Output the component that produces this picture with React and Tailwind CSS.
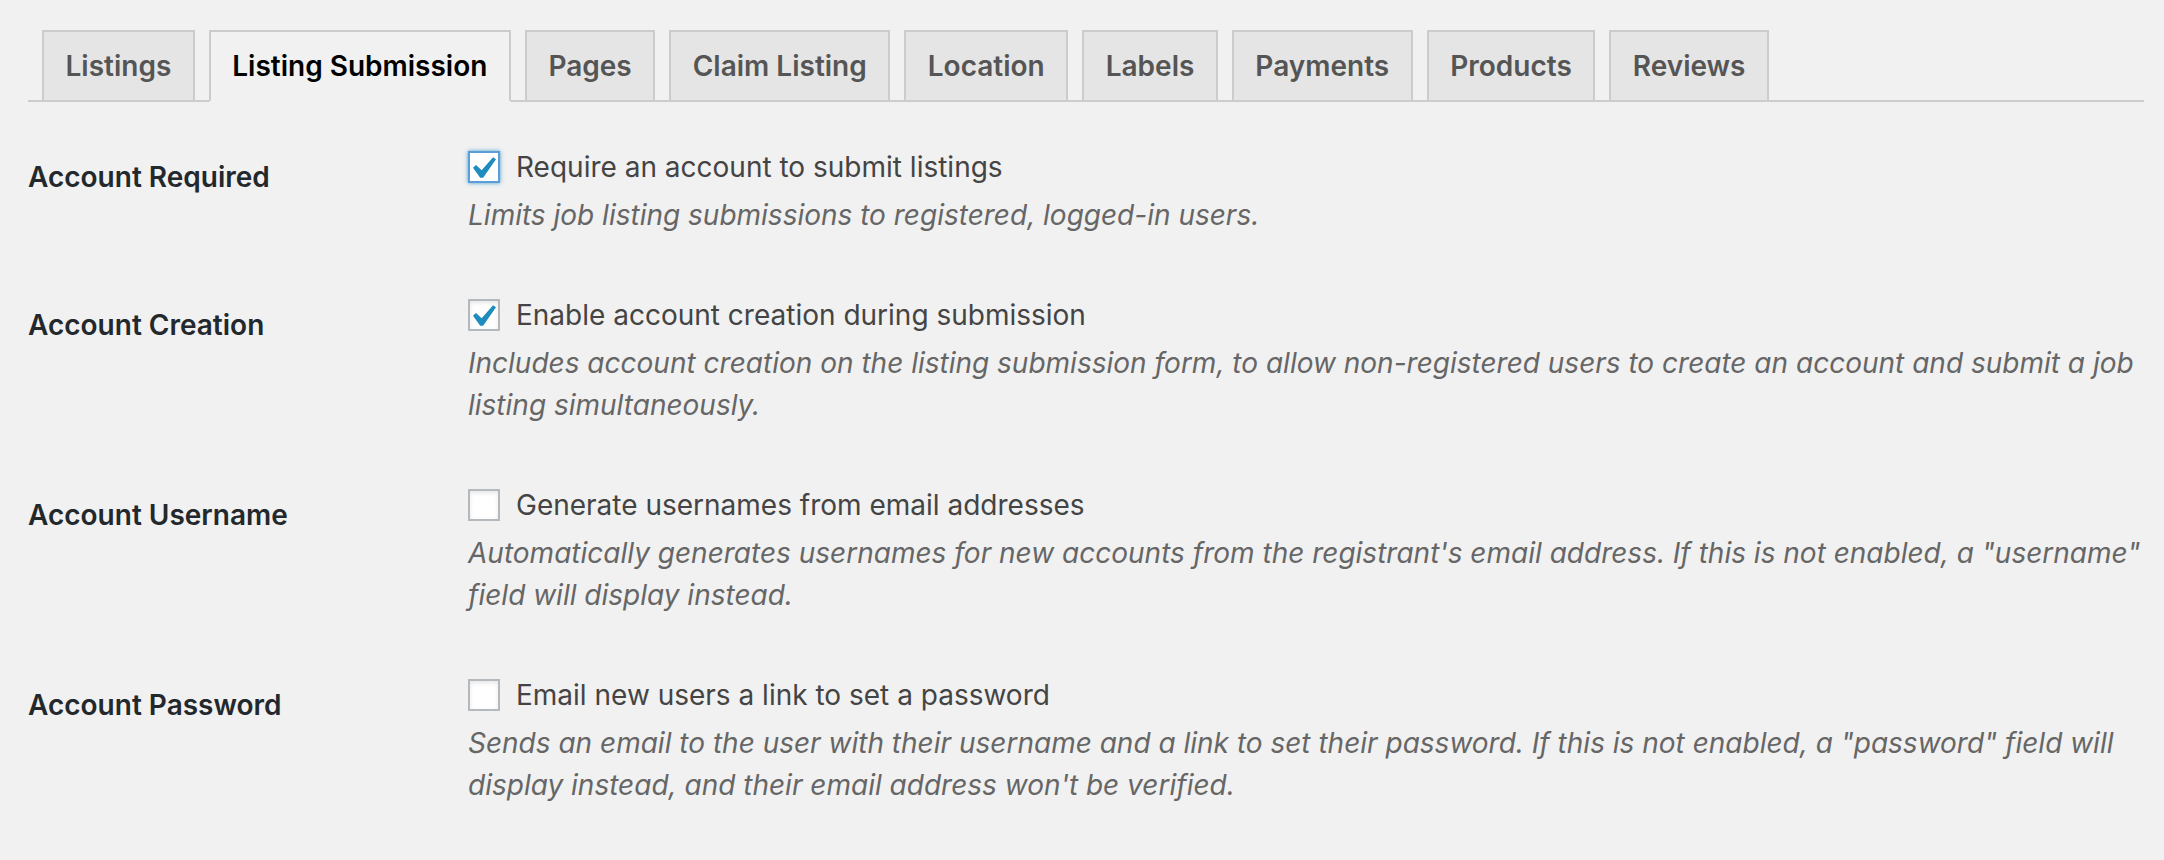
import React from "react";

const TABS = [
  "Listings",
  "Listing Submission",
  "Pages",
  "Claim Listing",
  "Location",
  "Labels",
  "Payments",
  "Products",
  "Reviews",
];

const ROWS = [
  {
    label: "Account Required",
    option: "Require an account to submit listings",
    checked: true,
    focused: true,
    help: "Limits job listing submissions to registered, logged-in users.",
  },
  {
    label: "Account Creation",
    option: "Enable account creation during submission",
    checked: true,
    help: "Includes account creation on the listing submission form, to allow non-registered users to create an account and submit a job listing simultaneously.",
  },
  {
    label: "Account Username",
    option: "Generate usernames from email addresses",
    checked: false,
    help: 'Automatically generates usernames for new accounts from the registrant\'s email address. If this is not enabled, a "username" field will display instead.',
  },
  {
    label: "Account Password",
    option: "Email new users a link to set a password",
    checked: false,
    help: 'Sends an email to the user with their username and a link to set their password. If this is not enabled, a "password" field will display instead, and their email address won\'t be verified.',
  },
];

const Checkbox = ({ checked, focused }) => (
  <span
    className={
      focused
        ? "relative block w-[32px] h-[32px] shrink-0 bg-white border-2 border-[#5b9dd9] shadow-[0_0_4px_rgba(30,140,190,0.8)]"
        : "relative block w-[32px] h-[32px] shrink-0 bg-white border-2 border-[#b4b9be] shadow-[inset_0_2px_4px_rgba(0,0,0,0.1)]"
    }
  >
    {checked && (
      <svg
        className="absolute left-[3px] top-[4px]"
        width="23"
        height="21"
        viewBox="5.78 4.89 10.39 9.32"
      >
        <path
          d="M14.83 4.89l1.34.94-5.81 8.38H9.02L5.78 9.67l1.34-1.25 2.57 2.4z"
          fill="#1e8cbe"
        />
      </svg>
    )}
  </span>
);

const SettingRow = ({ row }) => (
  <div className="flex">
    <div className="w-[420px] shrink-0 pr-[20px] pt-[41px] pb-[40px] text-[28px] leading-[36.4px] font-semibold text-[#23282d]">
      {row.label}
    </div>
    <div className="flex-1 pl-[20px] py-[30px]">
      <label className="flex items-center gap-[16px] text-[28px] leading-[38px] text-[#444]">
        <Checkbox checked={row.checked} focused={row.focused} />
        <span>{row.option}</span>
      </label>
      <p className="mt-[8px] text-[28px] leading-[42px] italic text-[#666]">
        {row.help}
      </p>
    </div>
  </div>
);

export default function App() {
  return (
    <div
      className="min-h-screen bg-[#f1f1f1] pl-[28px] pr-[20px] pt-[30px]"
      style={{ fontFamily: "Inter, 'Liberation Sans', sans-serif" }}
    >
      <nav className="flex items-end border-b-2 border-[#cccccc]">
        {TABS.map((tab) => {
          const active = tab === "Listing Submission";
          return (
            <a
              key={tab}
              className={
                active
                  ? "ml-[14px] -mb-[2px] border-2 border-[#cccccc] border-b-[#f1f1f1] bg-[#f1f1f1] px-[21.5px] py-[10px] text-[28px] leading-[48px] font-semibold text-black"
                  : "ml-[14px] border-2 border-b-0 border-[#cccccc] bg-[#e5e5e5] px-[21.5px] py-[10px] text-[28px] leading-[48px] font-semibold text-[#555]"
              }
            >
              {tab}
            </a>
          );
        })}
      </nav>
      <div className="mt-[16px]">
        {ROWS.map((row) => (
          <SettingRow key={row.label} row={row} />
        ))}
      </div>
    </div>
  );
}
